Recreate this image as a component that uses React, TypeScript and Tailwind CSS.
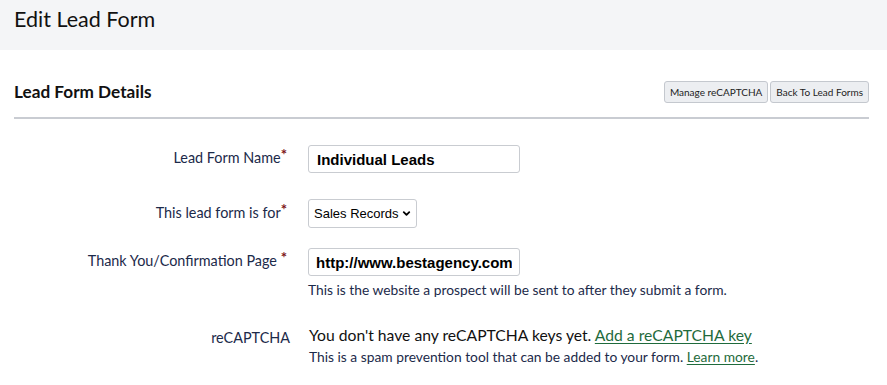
import { ChevronDown } from "lucide-react";

export default function App() {
  return (
    <div className="w-[887px] h-[385px] bg-white overflow-hidden text-[#1d2433] font-['Lato',sans-serif]">
      <div className="h-[50px] bg-[#f4f5f7] px-[14px] pt-[4px]">
        <h1 className="text-[21.5px] leading-[30px] text-[#111]">Edit Lead Form</h1>
      </div>

      <div className="px-[14px] pt-[31px]">
        <div className="flex items-center justify-between pr-[4px] h-[22px]">
          <h2 className="text-[17.2px] font-bold text-[#111]">Lead Form Details</h2>
          <div className="flex gap-[2px]">
            <button className="h-[22px] px-[5px] text-[10px] bg-[#eceef1] border border-[#c4c8ce] rounded-[3px] text-[#222]">
              Manage reCAPTCHA
            </button>
            <button className="h-[22px] px-[5px] text-[10px] bg-[#eceef1] border border-[#c4c8ce] rounded-[3px] text-[#222]">
              Back To Lead Forms
            </button>
          </div>
        </div>
        <div className="mt-[14px] h-[2px] bg-[#c9ccd2] w-[855px]" />
      </div>

      <div className="mt-[26px] text-[14.4px]">
        <div className="flex items-start">
          <label className="w-[290px] pr-[3px] text-right pt-[2px] text-[#1c2a4a]">
            Lead Form Name<span className="text-[#7d1416] font-bold align-top text-[15px] leading-none">*</span>
          </label>
          <div className="pl-[18px]">
            <input
              readOnly
              value="Individual Leads"
              className="w-[212px] h-[28px] border border-[#c9ccd1] rounded-[3px] px-[8px] text-[15px] font-bold text-black font-['Liberation_Sans',sans-serif] outline-none"
            />
          </div>
        </div>

        <div className="flex items-start mt-[25px]">
          <label className="w-[290px] pr-[3px] text-right pt-[4px] text-[#1c2a4a]">
            This lead form is for<span className="text-[#7d1416] font-bold align-top text-[15px] leading-none">*</span>
          </label>
          <div className="pl-[18px]">
            <div className="w-[109px] h-[29px] mt-[1px] border border-[#c9ccd1] rounded-[3px] pl-[5px] pr-[4px] flex items-center justify-between text-[13px] text-black font-['Liberation_Sans',sans-serif]">
              <span>Sales Records</span>
              <ChevronDown size={11} strokeWidth={4} />
            </div>
          </div>
        </div>

        <div className="flex items-start mt-[20px]">
          <label className="w-[290px] pr-[3px] text-right pt-[2px] text-[#1c2a4a]">
            Thank You/Confirmation Page <span className="text-[#7d1416] font-bold align-top text-[15px] leading-none">*</span>
          </label>
          <div className="pl-[18px]">
            <input
              readOnly
              value="http://www.bestagency.com"
              className="w-[212px] h-[28px] border border-[#c9ccd1] rounded-[3px] px-[7px] text-[15px] font-bold text-black font-['Liberation_Sans',sans-serif] outline-none"
            />
            <p className="text-[13.8px] mt-[4px] text-[#1c2a4a]">
              This is the website a prospect will be sent to after they submit a form.
            </p>
          </div>
        </div>

        <div className="flex items-start mt-[23px]">
          <label className="w-[290px] pr-[0px] text-right pt-[3px] text-[#1c2a4a]">reCAPTCHA</label>
          <div className="pl-[19px]">
            <p className="text-[15.7px] text-[#111]">
              You don't have any reCAPTCHA keys yet.{" "}
              <a className="text-[#1f6b3c] underline underline-offset-2">Add a reCAPTCHA key</a>
            </p>
            <p className="text-[13.8px] text-[#1c2a4a]">
              This is a spam prevention tool that can be added to your form.{" "}
              <a className="text-[#1f6b3c] underline underline-offset-2">Learn more</a>.
            </p>
          </div>
        </div>
      </div>
    </div>
  );
}
